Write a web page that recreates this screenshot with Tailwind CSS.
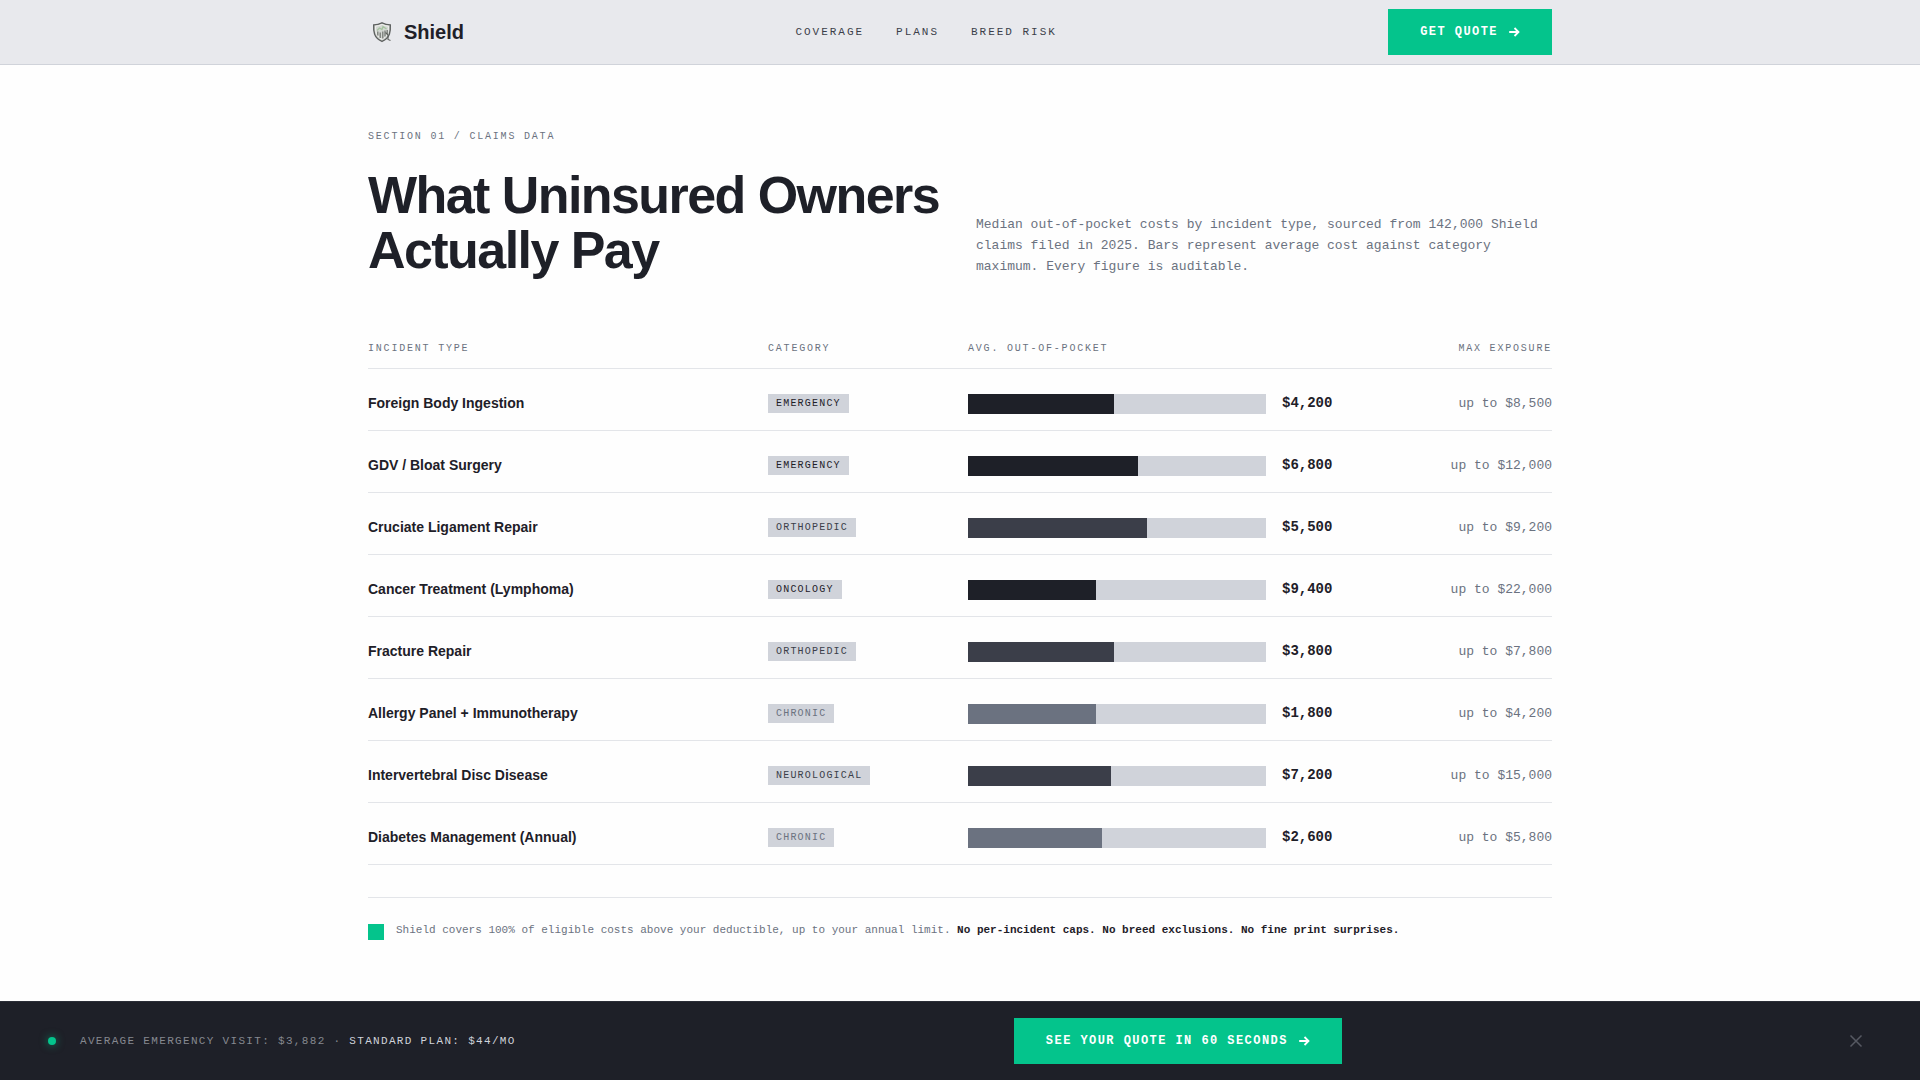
<!DOCTYPE html>
<html lang="en">
<head>
<meta charset="utf-8">
<meta name="viewport" content="width=device-width, initial-scale=1">
<title>Shield</title>
<script src="https://cdn.jsdelivr.net/npm/@tailwindcss/browser@4"></script>
</head>
<body class="flex min-h-screen flex-col bg-[#fefefe] font-['Liberation_Sans',Arial,sans-serif] text-[#1e2028]">

<header class="sticky top-0 z-10 border-b border-[#d0d3da] bg-[#e8e9ed]">
  <div class="mx-auto flex h-16 max-w-7xl items-center justify-between px-12">
    <a href="#" class="flex items-center gap-2">
      <svg class="size-7" viewBox="0 0 28 28" fill="none" aria-hidden="true">
        <path d="M14 4.8c2.400 1.200 5.600 2 8.300 2.100.3 6.100.1 13-8.300 16.500C5.600 19.900 5.400 13 5.700 6.900 8.400 6.800 11.600 6 14 4.800z" fill="#d3d6d2" stroke="#5d605f" stroke-width="1.400"/>
        <path d="M14 6.500c2 1 4.200 1.500 6.400 1.700.2 5-.5 10.200-6.400 13.100-5.900-2.900-6.600-8.100-6.400-13.100C9.800 8 12 7.500 14 6.500z" stroke="#f2f3f1" stroke-width=".9"/>
        <path d="M9 12.500l2.500-2.500 2.500 1.500 1-3 3.500 2.500" stroke="#a5c4a0" stroke-width="1.300"/>
        <path d="M9.800 17.500v-4M12.200 20v-5.500M14.800 20.500v-7M17 18.500v-6M19.200 16v-4" stroke="#70746f" stroke-width="1.200"/>
        <path d="M17.500 14.500l2.500 2.500v4.500l2.500 1" stroke="#60635f" stroke-width="1.100"/>
      </svg>
      <span class="text-xl leading-7 font-bold">Shield</span>
    </a>
    <nav class="flex gap-8 font-['Liberation_Mono',monospace] text-[11px] leading-4 tracking-[0.18em] text-[#3b3e49]">
      <a href="#coverage">COVERAGE</a>
      <a href="#plans">PLANS</a>
      <a href="#breed-risk">BREED RISK</a>
    </nav>
    <button type="button" class="flex h-[46px] items-center gap-[10px] bg-[#04c48c] px-8 font-['Liberation_Mono',monospace] text-xs font-bold tracking-[0.12em] text-white">
      GET QUOTE
      <svg class="size-3" viewBox="0 0 12 12" fill="none" stroke="currentColor" stroke-width="1.800" aria-hidden="true"><path d="M1.200 6h9.300M6.500 2l4 4-4 4"/></svg>
    </button>
  </div>
</header>

<main id="coverage" class="mx-auto w-full max-w-7xl flex-1 px-12 pt-16 pb-14">
  <p class="mb-6 font-['Liberation_Mono',monospace] text-[10px] leading-[15px] tracking-[0.18em] text-[#6b7280]">SECTION 01 / CLAIMS DATA</p>
  <div class="mb-16 grid grid-cols-2 items-end gap-8">
    <h1 class="text-[52px] leading-[1.05] font-bold tracking-[-0.03em]">What Uninsured Owners Actually Pay</h1>
    <p class="font-['Liberation_Mono',monospace] text-[13px] leading-[21px] text-[#6b7280]">Median out-of-pocket costs by incident type, sourced from 142,000 Shield claims filed in 2025. Bars represent average cost against category maximum. Every figure is auditable.</p>
  </div>

  <table class="w-full table-fixed border-separate border-spacing-0 text-left font-['Liberation_Mono',monospace] [&_td]:border-b [&_td]:border-[#e3e5e9] [&_td]:pt-[25px] [&_td]:pb-4 [&_td]:align-top [&_th]:border-b [&_th]:border-[#e3e5e9]">
    <colgroup><col><col class="w-50"><col class="w-96"><col class="w-50"></colgroup>
    <thead>
      <tr class="text-[10px] leading-[15px] tracking-[0.18em] text-[#6b7280] [&_th]:pb-3 [&_th]:font-normal">
        <th scope="col">INCIDENT TYPE</th><th scope="col">CATEGORY</th><th scope="col">AVG. OUT-OF-POCKET</th><th scope="col" class="text-right">MAX EXPOSURE</th>
      </tr>
    </thead>
    <tbody id="claims"></tbody>
  </table>

  <div class="mt-8 flex items-start gap-3 border-t border-[#e3e5e9] pt-6">
    <span class="mt-[2px] size-4 shrink-0 bg-[#04c48c]"></span>
    <p class="font-['Liberation_Mono',monospace] text-[11px] leading-4 text-[#6b7280]">Shield covers 100% of eligible costs above your deductible, up to your annual limit. <strong class="font-bold text-[#1e2028]">No per-incident caps. No breed exclusions. No fine print surprises.</strong></p>
  </div>
</main>

<aside class="sticky bottom-0 flex items-center justify-between border-t border-[#2b2e37] bg-[#1e2028] px-12 py-4 font-['Liberation_Mono',monospace]">
  <div class="flex items-center gap-6">
    <span class="size-2 rounded-full bg-[#04c48c] shadow-[0_0_8px_#04c48c99]"></span>
    <p class="text-[11px] leading-4 tracking-[0.12em] text-[#868990]">AVERAGE EMERGENCY VISIT: $3,882 · <span class="text-[#d0d3da]">STANDARD PLAN: $44/MO</span></p>
  </div>
  <button type="button" class="flex h-[46px] items-center gap-[10px] bg-[#04c48c] px-8 text-xs font-bold tracking-[0.12em] text-white">
    SEE YOUR QUOTE IN 60 SECONDS
    <svg class="size-3" viewBox="0 0 12 12" fill="none" stroke="currentColor" stroke-width="1.800" aria-hidden="true"><path d="M1.200 6h9.300M6.500 2l4 4-4 4"/></svg>
  </button>
  <button type="button" aria-label="Dismiss" class="p-2 text-[#565962]">
    <svg class="size-4" viewBox="0 0 16 16" fill="none" stroke="currentColor" stroke-width="1.500" aria-hidden="true"><path d="M2.500 2.500l11 11M13.500 2.500l-11 11"/></svg>
  </button>
</aside>

<script>
  const tones = {
    dark: ['text-[#1e2028]', 'bg-[#1e2028]'],
    mid: ['text-[#3b3e49]', 'bg-[#3b3e49]'],
    soft: ['text-[#6b7280]', 'bg-[#6b7280]'],
  };
  const claims = [
    ['Foreign Body Ingestion', 'EMERGENCY', 49, '$4,200', '$8,500', 'dark'],
    ['GDV / Bloat Surgery', 'EMERGENCY', 57, '$6,800', '$12,000', 'dark'],
    ['Cruciate Ligament Repair', 'ORTHOPEDIC', 60, '$5,500', '$9,200', 'mid'],
    ['Cancer Treatment (Lymphoma)', 'ONCOLOGY', 43, '$9,400', '$22,000', 'dark'],
    ['Fracture Repair', 'ORTHOPEDIC', 49, '$3,800', '$7,800', 'mid'],
    ['Allergy Panel + Immunotherapy', 'CHRONIC', 43, '$1,800', '$4,200', 'soft'],
    ['Intervertebral Disc Disease', 'NEUROLOGICAL', 48, '$7,200', '$15,000', 'mid'],
    ['Diabetes Management (Annual)', 'CHRONIC', 45, '$2,600', '$5,800', 'soft'],
  ];
  document.getElementById('claims').innerHTML = claims.map(([name, cat, pct, avg, max, tone]) => `
    <tr>
      <td class="font-['Liberation_Sans',Arial,sans-serif] text-sm leading-[18px] font-bold">${name}</td>
      <td><span class="block h-[19px] w-fit bg-[#d0d3da] px-2 text-[10px] leading-5 tracking-[0.12em] ${tones[tone][0]}">${cat}</span></td>
      <td><div class="flex items-start gap-4">
        <div class="h-5 flex-1 bg-[#d0d3da]"><div class="h-full ${tones[tone][1]}" style="width:${pct}%"></div></div>
        <span class="w-[70px] text-sm leading-[18px] font-bold">${avg}</span>
      </div></td>
      <td class="text-right text-[13px] leading-5 text-[#6b7280]">up to ${max}</td>
    </tr>`).join('');
</script>
</body>
</html>
